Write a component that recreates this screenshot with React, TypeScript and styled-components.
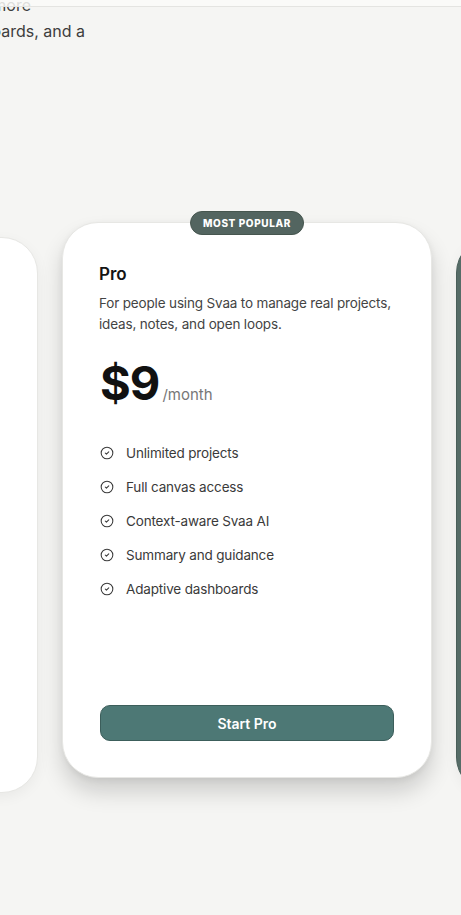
import React from 'react';
import styled, { createGlobalStyle } from 'styled-components';
import { CircleCheck } from 'lucide-react';

const GlobalStyle = createGlobalStyle`
  html, body {
    margin: 0;
    padding: 0;
    background: #f5f5f3;
    font-family: Inter, "Noto Sans", sans-serif;
    color: #1a1a1a;
    overflow: hidden;
  }
  * { box-sizing: border-box; }
`;

const TopBar = styled.header`
  position: fixed;
  top: 0;
  left: 0;
  right: 0;
  height: 7px;
  background: rgba(250, 250, 248, 0.85);
  border-bottom: 1px solid #e4e4e1;
  z-index: 10;
`;

const Page = styled.main`
  display: flex;
  flex-direction: column;
  width: 461px;
  height: 915px;
  overflow: hidden;
`;

const Hero = styled.div`
  display: flex;
  flex-direction: column;
  margin-top: -8px;
  font-size: 16px;
  line-height: 26px;
  color: #3d3d3d;
`;

const HeroLine = styled.div<{ $end: number }>`
  display: flex;
  justify-content: flex-end;
  width: ${p => p.$end}px;
  white-space: nowrap;
`;

const CardRow = styled.section`
  display: flex;
  align-items: flex-start;
  gap: 24px;
  margin-top: 178px;
  margin-left: -332px;
`;

const Card = styled.article<{ $variant: 'plain' | 'featured' | 'dark' }>`
  position: relative;
  flex: 0 0 370px;
  height: 556px;
  display: flex;
  flex-direction: column;
  padding: 38px 37px 36px 37px;
  border-radius: 36px;
  margin-top: ${p => (p.$variant === 'featured' ? 0 : 15)}px;
  background: ${p => (p.$variant === 'dark' ? '#566c67' : '#ffffff')};
  border: 1px solid ${p => (p.$variant === 'dark' ? '#4a5f5a' : '#e7e7e4')};
  box-shadow: ${p =>
    p.$variant === 'featured'
      ? '0 14px 22px rgba(0,0,0,0.16), 0 2px 6px rgba(0,0,0,0.06)'
      : '0 4px 14px rgba(0,0,0,0.05)'};
`;

const Badge = styled.span`
  position: absolute;
  top: -12px;
  left: 50%;
  transform: translateX(-50%);
  height: 24px;
  padding: 0 12px;
  display: flex;
  align-items: center;
  border-radius: 12px;
  background: #536560;
  border: 1px solid #46564f;
  color: #ffffff;
  font-size: 10px;
  font-weight: 800;
  letter-spacing: 0.06em;
  white-space: nowrap;
`;

const PlanName = styled.h3`
  margin: 1px 0 0 -1px;
  font-size: 17px;
  line-height: 24px;
  font-weight: 600;
  color: #141414;
`;

const PlanText = styled.p`
  margin: 7px 0 0 -1px;
  font-size: 13.5px;
  line-height: 21px;
  letter-spacing: -0.012em;
  color: #444444;
`;

const PriceRow = styled.div`
  display: flex;
  align-items: baseline;
  gap: 3px;
  margin-top: 22px;
`;

const Amount = styled.span`
  font-size: 47px;
  line-height: 52px;
  font-weight: 700;
  letter-spacing: -0.02em;
  color: #111111;
`;

const Period = styled.span`
  font-size: 15px;
  color: #777777;
`;

const Features = styled.ul`
  list-style: none;
  margin: 34px 0 0;
  padding: 0;
  display: flex;
  flex-direction: column;
  gap: 14px;
`;

const Feature = styled.li`
  display: flex;
  align-items: center;
  gap: 12px;
  height: 20px;
  font-size: 13.5px;
  letter-spacing: -0.012em;
  color: #3a3a3a;
  svg {
    flex: 0 0 auto;
    color: #3a3a3a;
  }
`;

const Cta = styled.button`
  margin-top: auto;
  height: 36px;
  width: 100%;
  border-radius: 10px;
  border: 1px solid #3c5e5b;
  background: #4d7875;
  color: #ffffff;
  font-family: inherit;
  font-size: 14px;
  font-weight: 600;
  cursor: pointer;
`;

const features = [
  'Unlimited projects',
  'Full canvas access',
  'Context-aware Svaa AI',
  'Summary and guidance',
  'Adaptive dashboards',
];

export default function App() {
  return (
    <>
      <GlobalStyle />
      <TopBar />
      <Page>
        <Hero>
          <HeroLine $end={31}>One place for projects, notes and more</HeroLine>
          <HeroLine $end={85}>with canvases, dashboards, and a</HeroLine>
        </Hero>
        <CardRow>
          <Card $variant="plain" />
          <Card $variant="featured">
            <Badge>MOST POPULAR</Badge>
            <PlanName>Pro</PlanName>
            <PlanText>
              For people using Svaa to manage real projects, ideas, notes, and open loops.
            </PlanText>
            <PriceRow>
              <Amount>$9</Amount>
              <Period>/month</Period>
            </PriceRow>
            <Features>
              {features.map(f => (
                <Feature key={f}>
                  <CircleCheck size={14} strokeWidth={1.8} />
                  {f}
                </Feature>
              ))}
            </Features>
            <Cta>Start Pro</Cta>
          </Card>
          <Card $variant="dark" />
        </CardRow>
      </Page>
    </>
  );
}
